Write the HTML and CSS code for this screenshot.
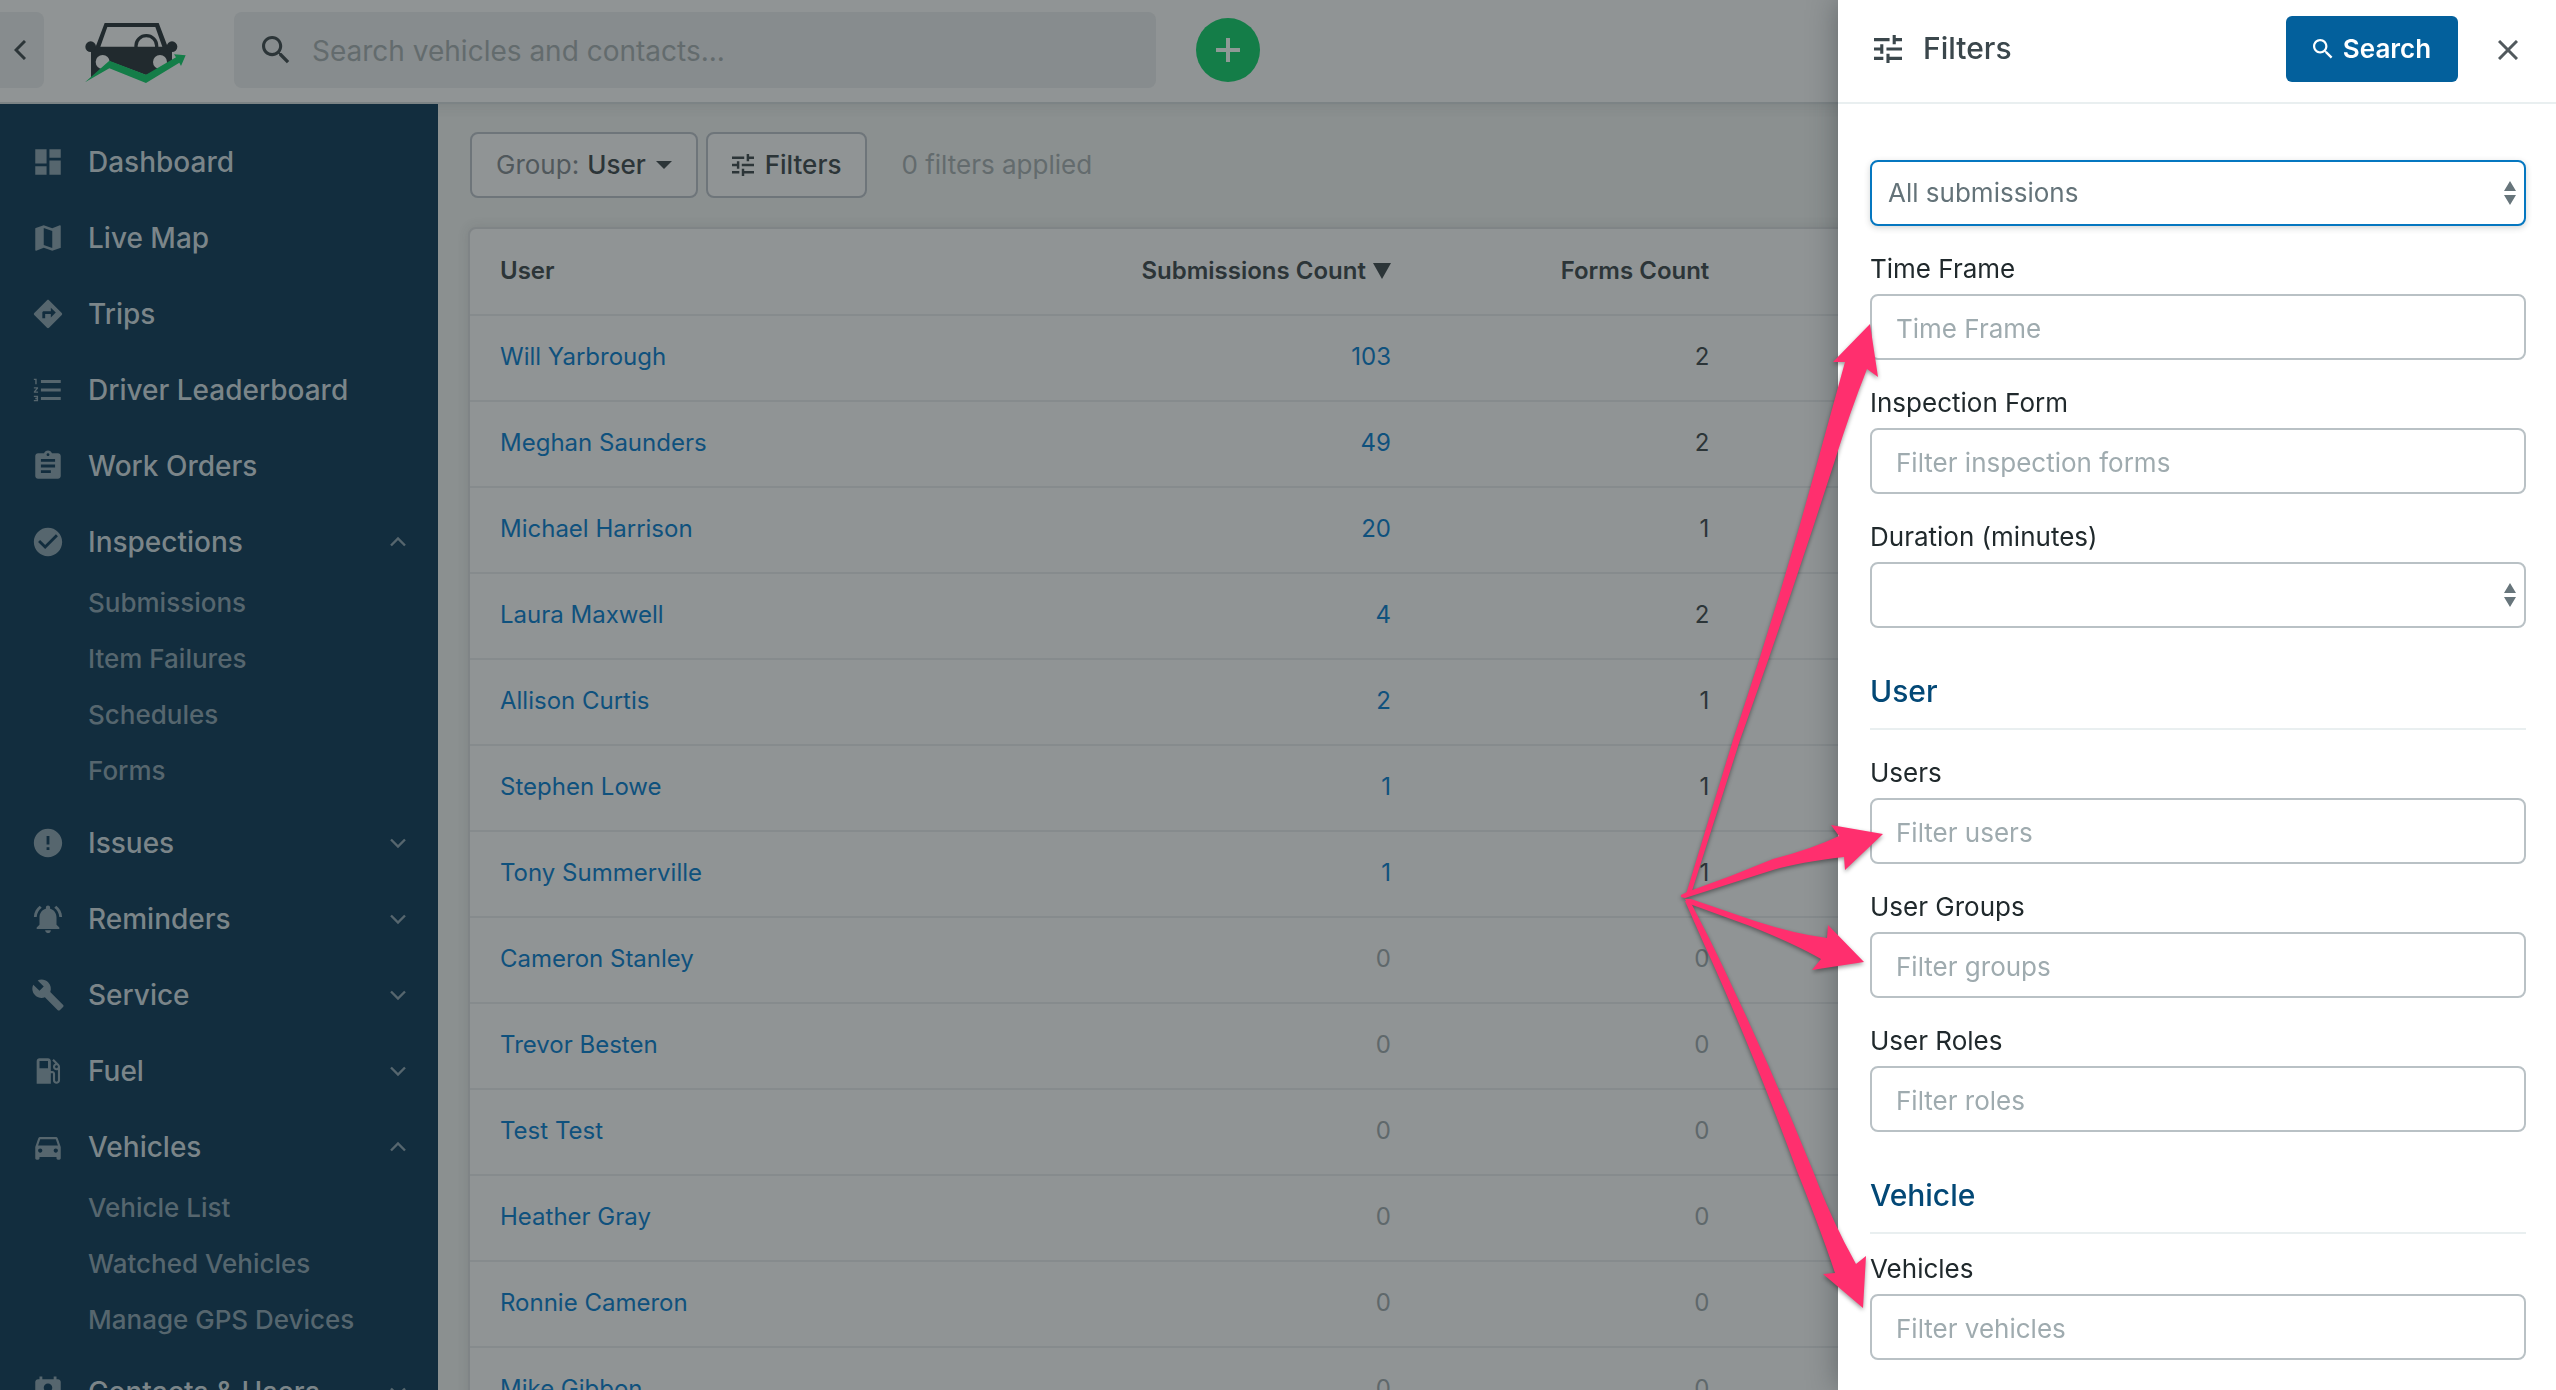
FILE: index.html
```html
<!DOCTYPE html>
<html lang="en">
<head>
<meta charset="utf-8">
<title>Inspection Submissions by User</title>
<link rel="stylesheet" href="styles.css">
</head>
<body>
<svg class="sprite" aria-hidden="true">
  <symbol id="i-dashboard" viewBox="0 0 24 24"><path d="M3 13h8V3H3v10zm0 8h8v-6H3v6zm10 0h8V11h-8v10zm0-18v6h8V3h-8z"/></symbol>
  <symbol id="i-map" viewBox="0 0 24 24"><path d="M20.5 3l-.16.03L15 5.1 9 3 3.36 4.9c-.21.07-.36.25-.36.48V20.5c0 .28.22.5.5.5l.16-.03L9 18.9l6 2.1 5.64-1.9c.21-.07.36-.25.36-.48V3.5c0-.28-.22-.5-.5-.5zM15 19l-6-2.11V5l6 2.11V19z"/></symbol>
  <symbol id="i-directions" viewBox="0 0 24 24"><path d="M21.71 11.29l-9-9c-.39-.39-1.02-.39-1.41 0l-9 9c-.39.39-.39 1.02 0 1.41l9 9c.39.39 1.02.39 1.41 0l9-9c.39-.38.39-1.01 0-1.41zM14 14.5V12h-4v3H8v-4c0-.55.45-1 1-1h5V7.5l3.5 3.5-3.5 3.5z"/></symbol>
  <symbol id="i-numbered" viewBox="0 0 24 24"><path d="M2 17h2v.5H3v1h1v.5H2v1h3v-4H2v1zm1-9h1V4H2v1h1v3zm-1 3h1.8L2 13.1v.9h3v-1H3.2L5 10.9V10H2v1zm5-6v2h14V5H7zm0 14h14v-2H7v2zm0-6h14v-2H7v2z"/></symbol>
  <symbol id="i-assignment" viewBox="0 0 24 24"><path d="M19 3h-4.18C14.4 1.84 13.3 1 12 1c-1.3 0-2.4.84-2.82 2H5c-1.1 0-2 .9-2 2v14c0 1.1.9 2 2 2h14c1.1 0 2-.9 2-2V5c0-1.1-.9-2-2-2zm-7 0c.55 0 1 .45 1 1s-.45 1-1 1-1-.45-1-1 .45-1 1-1zm2 14H7v-2h7v2zm3-4H7v-2h10v2zm0-4H7V7h10v2z"/></symbol>
  <symbol id="i-check" viewBox="0 0 24 24"><path d="M12 2C6.48 2 2 6.48 2 12s4.48 10 10 10 10-4.48 10-10S17.52 2 12 2zm-2 15l-5-5 1.41-1.41L10 14.17l7.59-7.59L19 8l-9 9z"/></symbol>
  <symbol id="i-error" viewBox="0 0 24 24"><path d="M12 2C6.48 2 2 6.48 2 12s4.48 10 10 10 10-4.48 10-10S17.52 2 12 2zm1 15h-2v-2h2v2zm0-4h-2V7h2v6z"/></symbol>
  <symbol id="i-bell" viewBox="0 0 24 24"><path d="M7.58 4.08L6.15 2.65C3.75 4.48 2.17 7.3 2.03 10.5h2c.15-2.65 1.51-4.97 3.55-6.42zm12.39 6.42h2c-.15-3.2-1.73-6.02-4.12-7.85l-1.42 1.43c2.02 1.45 3.39 3.77 3.54 6.42zM18 11c0-3.07-1.64-5.64-4.5-6.32V4c0-.83-.67-1.5-1.5-1.5s-1.5.67-1.5 1.5v.68C7.63 5.36 6 7.92 6 11v5l-2 2v1h16v-1l-2-2v-5zm-6 11c.14 0 .27-.01.4-.04.65-.14 1.18-.58 1.44-1.18.1-.24.15-.5.15-.78h-4c.01 1.1.9 2 2.01 2z"/></symbol>
  <symbol id="i-wrench" viewBox="0 0 24 24"><path d="M22.7 19l-9.1-9.1c.9-2.3.4-5-1.5-6.9-2-2-5-2.4-7.4-1.3L9 6 6 9 1.6 4.7C.4 7.1.9 10.1 2.9 12.1c1.9 1.9 4.6 2.4 6.9 1.5l9.1 9.1c.4.4 1 .4 1.4 0l2.3-2.3c.5-.4.5-1.1.1-1.4z"/></symbol>
  <symbol id="i-fuel" viewBox="0 0 24 24"><path d="M19.77 7.23l.01-.01-3.72-3.72L15 4.56l2.11 2.11c-.94.36-1.61 1.26-1.61 2.33 0 1.38 1.12 2.5 2.5 2.5.36 0 .69-.08 1-.21v7.21c0 .55-.45 1-1 1s-1-.45-1-1V14c0-1.1-.9-2-2-2h-1V5c0-1.1-.9-2-2-2H6c-1.1 0-2 .9-2 2v16h10v-7.5h1.5v5c0 1.38 1.12 2.5 2.5 2.5s2.5-1.12 2.5-2.5V9c0-.69-.28-1.32-.73-1.77zM12 10H6V5h6v5zm6 0c-.55 0-1-.45-1-1s.45-1 1-1 1 .45 1 1-.45 1-1 1z"/></symbol>
  <symbol id="i-car" viewBox="0 0 24 24"><path d="M18.92 6.01C18.72 5.42 18.16 5 17.5 5h-11c-.66 0-1.21.42-1.42 1.01L3 12v8c0 .55.45 1 1 1h1c.55 0 1-.45 1-1v-1h12v1c0 .55.45 1 1 1h1c.55 0 1-.45 1-1v-8l-2.08-5.99zM6.5 16c-.83 0-1.5-.67-1.5-1.5S5.67 13 6.5 13s1.5.67 1.5 1.5S7.33 16 6.5 16zm11 0c-.83 0-1.5-.67-1.5-1.5s.67-1.5 1.5-1.5 1.5.67 1.5 1.5-.67 1.5-1.5 1.5zM5 11l1.5-4.5h11L19 11H5z"/></symbol>
  <symbol id="i-contact" viewBox="0 0 24 24"><path d="M19 3h-1V1h-2v2H8V1H6v2H5c-1.11 0-2 .9-2 2v14c0 1.1.89 2 2 2h14c1.1 0 2-.9 2-2V5c0-1.1-.9-2-2-2zm-7 3c1.66 0 3 1.34 3 3s-1.34 3-3 3-3-1.34-3-3 1.34-3 3-3zm6 12H6v-1c0-2 4-3.1 6-3.1s6 1.1 6 3.1v1z"/></symbol>
  <symbol id="i-tune" viewBox="3 3 18 18"><path d="M3 17v2h6v-2H3zM3 5v2h10V5H3zm10 16v-2h8v-2h-8v-2h-2v6h2zM7 9v2H3v2h4v2h2V9H7zm14 4v-2H11v2h10zm-6-4h2V7h4V5h-4V3h-2v6z"/></symbol>
  <symbol id="i-search" viewBox="3 3 18 18"><path d="M15.5 14h-.79l-.28-.27C15.41 12.59 16 11.11 16 9.5 16 5.91 13.09 3 9.5 3S3 5.91 3 9.5 5.91 16 9.5 16c1.61 0 3.09-.59 4.23-1.57l.27.28v.79l5 4.99L20.49 19l-4.99-5zm-6 0C7.01 14 5 11.99 5 9.5S7.01 5 9.5 5 14 7.01 14 9.5 11.99 14 9.5 14z"/></symbol>
  <symbol id="i-down" viewBox="0 0 16 16"><path d="M1 4.5l7 7 7-7" fill="none" stroke="currentColor" stroke-width="2.4"/></symbol>
  <symbol id="i-up" viewBox="0 0 16 16"><path d="M1 11.5l7-7 7 7" fill="none" stroke="currentColor" stroke-width="2.4"/></symbol>
  <symbol id="i-sort" viewBox="0 0 12 24"><path d="M6 0l6 10H0zM0 14h12L6 24z"/></symbol>
</svg>

<header class="topbar">
  <button class="collapse" type="button" aria-label="Collapse menu"><svg width="12" height="20" viewBox="0 0 12 20"><path d="M11 1L2 10l9 9" fill="none" stroke="currentColor" stroke-width="3"/></svg></button>
  <a class="logo" href="#" aria-label="Home">
    <svg width="103" height="63" viewBox="42 36 309 189">
      <path fill="#212a2e" fill-rule="evenodd" d="M104 42H266L293 113H306V170H294L228 198L118 157L63 207V113H77zM112 54L91 113H277L256 54z"/>
      <path fill="none" stroke="#212a2e" stroke-width="10" d="M198 114v-4a31 30 0 0 1 62 0v4"/>
      <circle cx="62" cy="113" r="16" fill="#212a2e"/><circle cx="306" cy="113" r="16" fill="#212a2e"/>
      <circle cx="98" cy="159" r="21" fill="#909495"/><circle cx="270" cy="159" r="21" fill="#909495"/>
      <path fill="#147d48" d="M45 220L118 155L228 197L318 145L312 136L347 139L333 171L328 161L228 222L118 178z"/>
    </svg>
  </a>
  <label class="search"><svg class="search-icon" width="28" height="28"><use href="#i-search"/></svg><input type="search" placeholder="Search vehicles and contacts..." aria-label="Search vehicles and contacts"></label>
  <button class="add" type="button" aria-label="Add"><svg width="24" height="24" viewBox="0 0 24 24"><path d="M12 0v24M0 12h24" stroke="currentColor" stroke-width="4"/></svg></button>
</header>

<div class="shell">
  <nav class="sidebar" aria-label="Main">
    <ul class="menu">
      <li><a href="#"><svg class="icon"><use href="#i-dashboard"/></svg>Dashboard</a></li>
      <li><a href="#"><svg class="icon"><use href="#i-map"/></svg>Live Map</a></li>
      <li><a href="#"><svg class="icon"><use href="#i-directions"/></svg>Trips</a></li>
      <li><a href="#"><svg class="icon"><use href="#i-numbered"/></svg>Driver Leaderboard</a></li>
      <li><a href="#"><svg class="icon"><use href="#i-assignment"/></svg>Work Orders</a></li>
      <li><a href="#"><svg class="icon"><use href="#i-check"/></svg>Inspections<svg class="chev"><use href="#i-up"/></svg></a>
        <ul class="submenu">
          <li><a href="#">Submissions</a></li>
          <li><a href="#">Item Failures</a></li>
          <li><a href="#">Schedules</a></li>
          <li><a href="#">Forms</a></li>
        </ul></li>
      <li><a href="#"><svg class="icon"><use href="#i-error"/></svg>Issues<svg class="chev"><use href="#i-down"/></svg></a></li>
      <li><a href="#"><svg class="icon"><use href="#i-bell"/></svg>Reminders<svg class="chev"><use href="#i-down"/></svg></a></li>
      <li><a href="#"><svg class="icon"><use href="#i-wrench"/></svg>Service<svg class="chev"><use href="#i-down"/></svg></a></li>
      <li><a href="#"><svg class="icon"><use href="#i-fuel"/></svg>Fuel<svg class="chev"><use href="#i-down"/></svg></a></li>
      <li><a href="#"><svg class="icon"><use href="#i-car"/></svg>Vehicles<svg class="chev"><use href="#i-up"/></svg></a>
        <ul class="submenu">
          <li><a href="#">Vehicle List</a></li>
          <li><a href="#">Watched Vehicles</a></li>
          <li><a href="#">Manage GPS Devices</a></li>
        </ul></li>
      <li><a href="#"><svg class="icon"><use href="#i-contact"/></svg>Contacts &amp; Users<svg class="chev"><use href="#i-down"/></svg></a></li>
    </ul>
  </nav>

  <main class="content">
    <div class="toolbar">
      <button class="tool" type="button"><span class="tool-label">Group:</span> User <svg class="caret" width="16" height="8" viewBox="0 0 16 8"><path d="M0 0h16L8 8z"/></svg></button>
      <button class="tool" type="button"><svg class="tool-icon" width="22" height="22"><use href="#i-tune"/></svg>Filters</button>
      <span class="applied">0 filters applied</span>
    </div>
    <div class="card">
      <table>
        <thead><tr><th class="c-user">User</th><th class="c-num">Submissions Count <svg width="19" height="16" viewBox="0 0 19 16"><path d="M1 0h18l-9 16z"/></svg></th><th class="c-num">Forms Count</th><th></th></tr></thead>
        <tbody>
          <tr><td><a href="#">Will Yarbrough</a></td><td><a href="#">103</a></td><td>2</td><td></td></tr>
          <tr><td><a href="#">Meghan Saunders</a></td><td><a href="#">49</a></td><td>2</td><td></td></tr>
          <tr><td><a href="#">Michael Harrison</a></td><td><a href="#">20</a></td><td>1</td><td></td></tr>
          <tr><td><a href="#">Laura Maxwell</a></td><td><a href="#">4</a></td><td>2</td><td></td></tr>
          <tr><td><a href="#">Allison Curtis</a></td><td><a href="#">2</a></td><td>1</td><td></td></tr>
          <tr><td><a href="#">Stephen Lowe</a></td><td><a href="#">1</a></td><td>1</td><td></td></tr>
          <tr><td><a href="#">Tony Summerville</a></td><td><a href="#">1</a></td><td>1</td><td></td></tr>
          <tr class="zero"><td><a href="#">Cameron Stanley</a></td><td>0</td><td>0</td><td></td></tr>
          <tr class="zero"><td><a href="#">Trevor Besten</a></td><td>0</td><td>0</td><td></td></tr>
          <tr class="zero"><td><a href="#">Test Test</a></td><td>0</td><td>0</td><td></td></tr>
          <tr class="zero"><td><a href="#">Heather Gray</a></td><td>0</td><td>0</td><td></td></tr>
          <tr class="zero"><td><a href="#">Ronnie Cameron</a></td><td>0</td><td>0</td><td></td></tr>
          <tr class="zero"><td><a href="#">Mike Gibbon</a></td><td>0</td><td>0</td><td></td></tr>
        </tbody>
      </table>
    </div>
  </main>
</div>

<aside class="drawer" aria-label="Filters">
  <div class="drawer-head">
    <svg class="drawer-icon" width="28" height="28"><use href="#i-tune"/></svg>
    <h2>Filters</h2>
    <button class="primary" type="submit" form="filters"><svg width="20" height="20"><use href="#i-search"/></svg>Search</button>
    <button class="close" type="button" aria-label="Close"><svg width="20" height="20" viewBox="0 0 20 20"><path d="M1 1l18 18M19 1L1 19" stroke="currentColor" stroke-width="3"/></svg></button>
  </div>
  <form class="drawer-body" id="filters">
    <div class="select focused"><select aria-label="Submissions"><option>All submissions</option></select><svg class="sort"><use href="#i-sort"/></svg></div>
    <div class="field"><label for="time">Time Frame</label><input id="time" type="text" placeholder="Time Frame"></div>
    <div class="field"><label for="form">Inspection Form</label><input id="form" type="text" placeholder="Filter inspection forms"></div>
    <div class="field"><label for="duration">Duration (minutes)</label><div class="select"><select id="duration"><option></option></select><svg class="sort"><use href="#i-sort"/></svg></div></div>
    <h3>User</h3>
    <div class="field"><label for="users">Users</label><input id="users" type="text" placeholder="Filter users"></div>
    <div class="field"><label for="groups">User Groups</label><input id="groups" type="text" placeholder="Filter groups"></div>
    <div class="field"><label for="roles">User Roles</label><input id="roles" type="text" placeholder="Filter roles"></div>
    <h3>Vehicle</h3>
    <div class="field tight"><label for="vehicles">Vehicles</label><input id="vehicles" type="text" placeholder="Filter vehicles"></div>
  </form>
  <svg class="arrows" width="210" height="1010" viewBox="1675 310 210 1010" aria-hidden="true">
    <path d="M1870 324L1878 377L1867 369Q1850 412 1835 460Q1790 600 1740 740L1691 894L1685 898L1687 891L1733 740Q1780 600 1818 460L1845 362L1833 362z"/>
    <path d="M1883 834L1845 870L1844 857Q1800 862 1773 870L1685 898L1681 897V895L1687 892Q1730 877 1773 859Q1812 849 1839 836L1831 825z"/>
    <path d="M1864 962L1812 970L1821 959Q1795 944 1750 926L1687 903L1685 899L1691 899L1755 921Q1795 934 1827 938L1828 925z"/>
    <path d="M1863 1308L1823 1274L1835 1273Q1820 1228 1797 1171Q1750 1044 1704 944L1685 901L1690 901L1709 938Q1763 1048 1813 1171Q1832 1221 1856 1264L1866 1256z"/>
  </svg>
</aside>
</body>
</html>
```
FILE: styles.css
```css
* { box-sizing: border-box; }
body {
  margin: 0;
  height: 100vh;
  overflow: hidden;
  display: flex;
  flex-direction: column;
  background: #8b9090;
  color: #2c3538;
  font: 400 26px/38px Inter, "Liberation Sans", sans-serif;
}
svg { fill: currentColor; flex: none; }
.sprite { position: absolute; width: 0; height: 0; }
button, input, select { font: inherit; color: inherit; margin: 0; }
button { padding: 0; border: 0; background: none; }
a { color: inherit; text-decoration: none; }
ul { list-style: none; margin: 0; padding: 0; }

/* Top bar */
.topbar {
  flex: none;
  display: flex;
  align-items: center;
  height: 104px;
  padding-bottom: 2px;
  background: #909495;
  border-bottom: 2px solid #7c8385;
  box-shadow: 0 2px 12px rgba(40, 48, 52, .12);
  z-index: 1;
}
.collapse {
  display: flex;
  align-items: center;
  width: 44px;
  height: 76px;
  padding-left: 14px;
  background: #878c8e;
  border-radius: 0 8px 8px 0;
}
.logo { display: flex; margin: 4px 47px 0 40px; }
.search {
  display: flex;
  align-items: center;
  gap: 22px;
  flex: 0 1 922px;
  height: 76px;
  padding-left: 28px;
  background: #878c8e;
  border-radius: 8px;
}
.search input {
  flex: 1;
  border: 0;
  outline: 0;
  padding: 2px 0 0;
  background: none;
  font-size: 28px;
}
.search input::placeholder { color: #636b6d; opacity: 1; }
.add {
  display: flex;
  align-items: center;
  justify-content: center;
  width: 64px;
  height: 64px;
  margin-left: 40px;
  border-radius: 50%;
  background: #147d48;
  color: #8f9996;
}

/* Sidebar */
.shell { flex: 1; min-height: 0; display: flex; }
.sidebar {
  flex: none;
  width: 438px;
  padding-top: 20px;
  overflow: hidden;
  background: #122d3e;
  color: #7b8589;
  font-weight: 500;
  z-index: 2;
}
.menu > li { padding: 6px 0; }
.menu > li > a {
  display: flex;
  align-items: center;
  gap: 23px;
  height: 64px;
  padding: 0 32px 0 31px;
  font-size: 28px;
}
.icon { width: 34px; height: 34px; color: #56666e; }
.chev { width: 16px; height: 16px; margin-left: auto; color: #56666e; }
.submenu { padding-top: 1px; }
.submenu a { display: block; padding-left: 88px; line-height: 56px; color: #56666e; }

/* Main content */
.content { flex: 1; min-width: 0; padding: 28px 32px; }
.toolbar { display: flex; align-items: center; gap: 8px; margin-bottom: 29px; }
.tool {
  display: flex;
  align-items: center;
  gap: 8px;
  height: 66px;
  padding: 0 24px;
  border: 2px solid #6e757a;
  border-radius: 8px;
  background: #909495;
  font-weight: 500;
}
.tool-label { color: #50585c; font-weight: 400; }
.caret { margin-left: 2px; }
.tool-icon { margin-right: 3px; }
.applied { margin-left: 26px; color: #636b6d; }
.card {
  margin: 0 -2px;
  border: 2px solid #7f8486;
  border-radius: 8px 8px 0 0;
  background: #909495;
  box-shadow: 0 0 12px rgba(40, 48, 52, .12);
}
table { width: 100%; border-collapse: collapse; table-layout: fixed; font-size: 24px; }
th, td {
  height: 86px;
  padding: 0 30px 2px;
  border-bottom: 2px solid #868b8d;
  text-align: right;
  font-weight: 400;
}
th { font-weight: 600; }
th:first-child, td:first-child { text-align: left; }
.c-user { width: 30.8%; }
.c-num { width: 15.5%; }
td a { color: #0f517d; }
.zero td { color: #5f686b; }

/* Filters drawer */
.drawer {
  position: fixed;
  top: 0;
  right: 0;
  bottom: 0;
  z-index: 3;
  width: 718px;
  background: #fff;
  box-shadow: 0 0 28px rgba(30, 38, 42, .4);
}
.drawer-head {
  display: flex;
  align-items: center;
  height: 104px;
  padding: 0 38px 4px 36px;
  border-bottom: 2px solid #e9eff0;
  color: #3b474c;
}
.drawer-head h2 { flex: 1; margin: 0 0 2px 21px; font-size: 30px; font-weight: 500; }
.primary {
  display: flex;
  align-items: center;
  justify-content: center;
  gap: 10px;
  width: 172px;
  height: 66px;
  border-radius: 6px;
  background: #03609c;
  color: #fff;
  font-weight: 600;
}
.close { display: flex; margin: 2px 0 0 40px; color: #51595d; }
.drawer-body { padding: 56px 30px 30px 32px; color: #20292c; }
.field { margin-top: 24px; }
.tight { margin-top: 16px; }
.field label { display: block; margin-bottom: 6px; }
.field input, .select select {
  display: block;
  width: 100%;
  height: 66px;
  padding: 2px 24px 0;
  border: 2px solid #b9c1c5;
  border-radius: 8px;
  outline: 0;
  background: #fff;
}
.field input::placeholder { color: #9fabaf; opacity: 1; }
.select { position: relative; }
.select select { appearance: none; padding: 0 16px; color: #647379; }
.focused select { border-color: #0577c0; box-shadow: 0 2px 6px rgba(40, 48, 52, .2); }
.sort { position: absolute; top: 21px; right: 10px; width: 12px; height: 24px; color: #67757b; pointer-events: none; }
.drawer-body h3 {
  margin: 45px 0 0;
  padding-bottom: 19px;
  border-bottom: 2px solid #e9eff0;
  font-size: 30px;
  line-height: 36px;
  font-weight: 500;
  color: #034876;
}

/* Callout arrows drawn over the drawer edge */
.arrows {
  position: absolute;
  top: 310px;
  left: -163px;
  overflow: visible;
  fill: #ff2f6e;
  pointer-events: none;
  filter: drop-shadow(0 2px 2px rgba(0, 0, 0, .4));
}
```
